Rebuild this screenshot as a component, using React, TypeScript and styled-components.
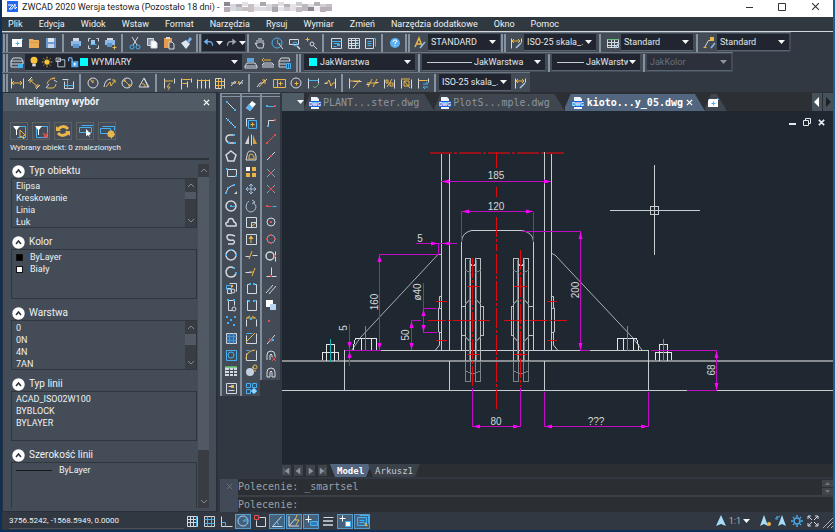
import React from "react";
import styled, { createGlobalStyle, css } from "styled-components";

const Global = createGlobalStyle`
  * { box-sizing: border-box; }
  html, body { margin: 0; padding: 0; }
  body { background: #323842; overflow: hidden; }
  button, select, input { font: inherit; color: inherit; margin: 0; padding: 0; border: 0; background: none; }
  ul { margin: 0; padding: 0; list-style: none; }
  svg { display: block; flex: none; }
`;

const ui = `Roboto, "Noto Sans", sans-serif`;
const mono = `"DejaVu Sans Mono", "Liberation Mono", monospace`;

/* ---------- icons ---------- */

type Part = [d: string, stroke: string, fill?: string, width?: number];
const W = "#d3d9e0";
const B = "#45b0f2";
const Y = "#eab648";
const R = "#e05050";
const G = "#8fa3b8";
const N = "none";

const ci = (x: number, y: number, r: number) =>
  `M${x - r} ${y}a${r} ${r} 0 1 0 ${2 * r} 0a${r} ${r} 0 1 0 ${-2 * r} 0z`;
const re = (x: number, y: number, w: number, h: number) => `M${x} ${y}h${w}v${h}h${-w}z`;
const dots = (...p: number[]) => {
  let s = "";
  for (let i = 0; i < p.length; i += 2) s += re(p[i] - 1, p[i + 1] - 1, 2, 2);
  return s;
};

const icons: Record<string, Part[]> = {
  fresh: [[re(3, 4, 10, 8), N, "#fff"], ["M8 6v4M6 8h4", B], ["M12 3l2 2", B]],
  open: [["M3 4h4l1 1h5v8H3z", N, "#e9ad5c"], ["M3 7h10", "#d89a45"]],
  save: [["M3 3h10v10H3z", N, "#6b9bd0"], [re(5, 3, 6, 4), N, "#dce6f0"], [re(5, 9, 6, 4), N, "#c5d5e8"]],
  print: [[re(3, 6, 10, 5), N, "#8db8e8"], [re(5, 3, 6, 3), N, W], [re(5, 9, 6, 4), N, "#5f93cc"]],
  preview: [["M3 6V3h2M11 3h2v3M3 10v3h2M11 13h2v-3", W], [re(6, 5, 4, 4), N, "#9fc4ee"], ["M5 9h6", B]],
  printPlus: [[re(3, 5, 10, 5), N, "#8db8e8"], [re(5, 3, 6, 2), N, W], [re(5, 8, 5, 4), N, "#5f93cc"], ["M12 10v4M10 12h4", Y]],
  cut: [["M5 2l5 8M11 2L6 10", W], [ci(5, 12, 2), B], [ci(11, 12, 2), B]],
  copy: [["M3 3h6v7H3z", W, "#8b97a5"], ["M7 6h4l2 2v5H7z", W, "#fff"]],
  paste: [["M3 3h8v10H3z", N, "#e79b4f"], [re(5, 2, 4, 2), N, W], ["M8 7h3l2 2v5H8z", W, "#434b57"]],
  brush: [["M3 8l5-3 4 4-4 5z", N, "#dbe7f3"], ["M9 6l3-4 2 2-3 4z", N, "#7db1e6"]],
  undo: [["M4 7h5q4 0 4 5", "#6fb1f0", N, 2], ["M7 3L2 7l5 4z", N, "#6fb1f0"]],
  redo: [["M12 7H7q-4 0-4 5", "#a3a9b0", N, 2], ["M9 3l5 4-5 4z", N, "#a3a9b0"]],
  hand: [["M5 9V5M7 8V3M9 8V3M11 9V5M5 9L3 8l3 5h5l1-5", W]],
  zoomRt: [[ci(8, 8, 5), B], ["M8 4v4h3", B], ["M10 9l4 5", W]],
  zoomWin: [["M3 4h9v5H3z", W], [ci(9, 9, 2), B], ["M11 11l3 3", W, N, 2]],
  zoomPrev: [["M2 4h4M4 2v4", Y], [ci(9, 9, 2), W], ["M11 11l3 3", W]],
  props: [[re(3, 3, 10, 10), W], ["M3 6h10M5 8h6M5 11h3", B], [re(9, 9, 3, 2), N, B]],
  table1: [[re(3, 3, 11, 10), W], ["M6 3v10M10 3v10M3 5h10M3 8h10M3 10h10", W], ["M11 7h2M11 10h2", B]],
  table2: [["M3 3h8v10H3z", W], ["M5 6h4M5 8h4M5 10h4", B], ["M11 3h2v8", B]],
  help: [[ci(8, 8, 5), N, "#58b0f5"], ["M6 7q0-2 2-2t2 1q0 1-2 2v1M8 10v1", "#fff"]],
  textStyle: [["M3 12L7 3l3 8M5 9h4", Y, N, 2], ["M8 13l5-6", "#8dbbe6", N, 2]],
  dimStyle: [["M3 3v10M13 3v4", W], ["M4 6h8M6 4L4 6l2 2M10 4l2 2-2 2", Y], ["M8 13l5-5", "#a9c9ea", N, 2]],
  tableStyle: [[re(2, 4, 11, 8), W], ["M2 7h11M2 10h11M6 4v8M9 4v8", W], ["M2 4h11", "#6cc277"], ["M10 13l4-5", "#a9c9ea", N, 2]],
  leader: [["M3 12L7 5h3", W], [re(9, 2, 4, 4), N, Y], ["M2 12h3", Y], ["M10 13l4-5", "#8dbbe6", N, 2]],
  layers: [["M4 3h8l2 3H2zM2 6v3h12V6M2 9v3h7", W], [re(9, 9, 5, 4), N, B]],
  bulb: [[ci(8, 6, 4), N, "#f7c33c"], [re(6, 10, 4, 3), N, "#d9dde2"]],
  sun: [[ci(8, 8, 3), N, "#f7c33c"], ["M8 2v2M8 12v2M2 8h2M12 8h2M4 4l1 1M11 11l1 1M12 4l-1 1M5 11l-1 1", "#f7c33c"]],
  vp: [["M5 5h8v8H5zM3 3h5v4H3z", W]],
  lock: [["M3 7V5q0-2 2-2t2 2v3", "#79b8ee", N, 2], [re(6, 7, 8, 7), N, "#4aa6ee"], [re(9, 9, 2, 3), N, "#fff"]],
  layerA: [["M4 8h8l2 3H2zM2 11v2h12v-2", W], [re(4, 3, 7, 4), N, "#5fa2dc"]],
  layerB: [["M4 8h8l2 2H2zM2 12h12", W], ["M4 5h7M4 3l-2 2 2 2", Y]],
  layerC: [["M4 3h8l1 3H2zM2 6v6h7M2 9h7", W], [re(9, 8, 5, 5), N, "#434b57"], ["M9 8h4v5H9zM11 8v5", B]],
  dLin: [["M2 3v10M14 3v10", W], ["M3 8h10M5 6L3 8l2 2M11 6l2 2-2 2", Y]],
  dAli: [["M2 6l4-4M10 14l4-4", W], ["M4 5l8 7M4 8V5h3M12 9v3H9", Y]],
  dArc: [["M3 13l3-4M11 5l3 2", W], ["M4 9q2-6 8-6M12 3l-3 1M4 13h6q3-1 3-4", Y]],
  dOrd: [["M2 4h6M4 6v7h9V6", W], ["M7 4v9M4 10h9", B]],
  dRad: [[ci(8, 8, 5), W], ["M8 8l-3-4M8 8V5", Y]],
  dJog: [["M2 12q1-8 7-8", W], ["M4 12l4-5 1 4 4-6M10 5h3v3", Y]],
  dDia: [[ci(8, 8, 5), W], ["M5 5l6 6M5 7V5h2M11 9v2H9", Y]],
  dAng: [["M8 3L3 12h10zM8 3l4 9", W], ["M6 9q3-1 3 3", Y]],
  dQui: [["M3 3v10M13 3v5", W], ["M3 6h9M9 8l-3 4h3l-2 3", Y]],
  dBas: [["M3 3v11M9 6v6M13 3v4", W], ["M4 4h8M4 8h5", Y]],
  dCon: [["M2 4v9M6 4v9M10 4v9M14 4v9", W], ["M2 5h12", Y]],
  dSpa: [["M3 3h6M3 13h6M3 3v10M12 3v10", W], ["M3 6h9M3 10h9M6 3v10M9 3v10", Y]],
  dBrk: [["M2 8h4M10 8h4M2 11l4-5M10 10l4-5", W], ["M6 9l1-3M9 9l1-3", Y]],
  dLea: [["M3 12l3-4h3M9 8l4-4", W], ["M5 12l6-7M11 9V5H8", Y]],
  dTol: [[re(2, 4, 12, 8), Y], ["M6 4v8M9 6v4M7 8h4", Y]],
  dCen: [[ci(8, 8, 5), W], ["M8 6v4M6 8h4", Y]],
  dIns: [["M3 3v10M13 3v5", W], ["M3 5h10", B], ["M8 11l2 2 4-4", "#58b070"]],
  dJg2: [["M13 3v10M2 8h3", W], ["M3 8h2l2-3 2 6 2-3h2", Y]],
  dEd1: [["M2 3v10M6 6h8", W], ["M2 6h10M6 13l7-8", Y]],
  dEd2: [["M2 9h3M11 7h3", W], ["M4 12l4-8M9 12l4-8M3 8h10", Y]],
  dEd3: [["M3 4v9M13 4v9", W], ["M6 12l5-8M5 5h2v3H5zM9 8h3v3H9z", Y]],
  dEd4: [["M3 4v9M13 4v9", W], ["M3 4h9M6 6h5v5H6zM6 6l6 7", Y]],
  dUpd: [["M3 3v10M13 3v4", W], ["M3 5h9", Y], ["M8 9h5l-2-2M13 12H8l2 2", B]],
  line: [["M4 4l8 8", W], [dots(4, 4, 12, 12), N, B]],
  xline: [["M3 3l10 10", W], [dots(5, 5, 8, 8, 12, 12), N, B]],
  pline: [["M11 4H7q-4 0-4 4 0 3 4 4h5", W, N, 2], [dots(11, 4, 12, 12, 6, 12), N, B]],
  poly: [["M8 3l5 4-2 6H5L3 7z", W, N, 2]],
  rect: [[re(4, 5, 9, 7), W], [dots(4, 5, 13, 12), N, B]],
  arc: [["M3 13q1-8 9-9", W], [dots(3, 12, 5, 7, 11, 4), N, B], ["M11 13l3-3v3z", N, W]],
  circ: [[ci(8, 8, 5), W, N, 2], [dots(8, 8), N, B], ["M8 8h4", B]],
  cloud: [["M4 12h9q1-3-2-4-1-5-5-3-1 1-1 3-4 1-1 4z", W, N, 2]],
  spl: [["M12 5Q4 2 4 6t6 3q3 2 0 4H5", W, N, 2]],
  elli: [[ci(8, 8, 5), W, N, 2], [dots(8, 3, 3, 8, 13, 8), N, B]],
  earc: [["M11 4Q5 1 3 7q0 6 5 6 4 0 5-4", W, N, 2], [dots(11, 4, 13, 9), N, B]],
  ins: [["M6 3h7v8M4 8h4v5H4z", W], ["M3 5h5v4H3z", B], [ci(10, 11, 2), W], [dots(9, 6), N, Y]],
  blk: [["M5 3h6v5M5 3v10h4", W], [ci(11, 12, 2), W], [dots(5, 3, 11, 3), N, B]],
  pts: [[dots(4, 4, 12, 4, 8, 7, 5, 10, 11, 12), N, B]],
  hat: [[re(3, 3, 10, 10), W, "#2d6ea8"], ["M3 6h10M3 10h10M6 3v10M10 3v10", "#5a90c0"]],
  reg: [[re(3, 3, 10, 10), B], [ci(8, 8, 3), B]],
  tab: [[re(2, 4, 12, 9), N, W], ["M2 7h12M2 10h12M6 5v8M10 5v8", "#434b57"], ["M2 4h12", "#5fc070", N, 2]],
  mtx: [[re(3, 3, 10, 10), W], ["M5 6h3M5 10h6", W], [re(8, 5, 3, 3), N, Y]],
  ers: [["M3 10l6-7 4 3-6 7z", N, "#fff"], ["M3 10l3-4 4 4-3 3z", N, "#5db4f3"]],
  cpy: [["M3 3h8M3 3v8", W], [re(5, 5, 8, 8), B], ["M9 7v4M7 9h4", Y]],
  mir: [["M6 4v9H2z", N, "#ccd2da"], ["M10 4v9h4z", N, "#d9a23f"], ["M8 3v11", W]],
  off: [["M3 12h10V8q-1-5-5-5T4 8z", W], ["M6 11h5V9q-1-3-3-3T6 9z", Y]],
  arr: [[re(3, 3, 4, 4), N, "#fff"], [re(9, 3, 4, 4) + re(3, 9, 4, 4) + re(9, 9, 4, 4), N, Y]],
  mov: [["M8 3v10M3 8h10M6 5l2-2 2 2M6 11l2 2 2-2M5 6L3 8l2 2M11 6l2 2-2 2", "#9dbcdc"]],
  rot: [["M6 3Q3 5 3 9q1 5 5 5 5-1 5-6l-3-4", "#a8bdd4"], ["M9 2l3 2-3 2", "#a8bdd4"]],
  scl: [[re(3, 3, 10, 10), W], ["M8 13V8h5", W], ["M9 12l4-3", Y]],
  str: [[re(3, 3, 10, 10), W], ["M8 12V6M6 8l2-3 2 3", Y, Y]],
  trm: [["M2 9h4M9 8h5", W], ["M6 12l3-8", Y]],
  ext: [["M2 8h6", W], ["M9 12l3-8M6 8h4", Y]],
  bk1: [["M6 4H4v9h9V4h-2", W], [dots(7, 4, 11, 4), N, B]],
  bk2: [["M5 3H4v10h9V3h-1", W], [dots(6, 4, 11, 4), N, B]],
  joi: [["M3 13V6M13 13V6", W], ["M4 5l3-2M12 5L9 3M3 5h10", Y], [dots(8, 6), N, B]],
  cha: [["M3 5v8h10V3", W], ["M3 12l9-9", Y], ["M3 3h6", B]],
  fil: [["M3 6v7h10V3", W], ["M3 12q0-8 9-9", Y], ["M3 3h3", B]],
  exp: [[ci(7, 9, 4), N, "#c3d0e2"], [ci(12, 4, 2), Y], ["M9 4l2 1M12 7v2", Y]],
  bed: [[re(3, 3, 4, 4) + re(9, 3, 4, 4) + re(3, 9, 4, 4), B], ["M11 8l3 3-3 3-3-3z", B, "#9bd3ff"]],
  sA: [["M4 8h8", B], [dots(4, 8), N, B], [dots(12, 8), N, R]],
  sB: [["M5 11V5h7", W], [dots(5, 11), N, B], [dots(12, 5), N, R]],
  sC: [["M4 12l8-8", R], [dots(4, 12, 12, 4), N, R]],
  sD: [["M4 12l8-8", W], [dots(8, 8), N, R]],
  sE: [["M4 4l8 8M12 4l-8 8", G], [dots(8, 8), N, R]],
  sF: [["M4 4l8 8M12 4l-8 8", G], ["M6 6l4 4M10 6l-4 4", R]],
  sG: [["M4 8h4", R], [dots(4, 8), N, R], ["M9 8h4", B]],
  sH: [[ci(8, 8, 4), W], [dots(8, 8), N, R]],
  sI: [[ci(8, 8, 4), G], [dots(8, 4, 8, 12, 4, 8, 12, 8), N, R]],
  sJ: [[ci(7, 8, 4), W, N, 2], ["M12 3v10", W], [dots(12, 8), N, R]],
  sK: [["M8 3v9M3 12h10", W], [dots(8, 12), N, R]],
  sL: [["M3 12l7-8M6 13l7-8", W]],
  sM: [[re(3, 3, 7, 7), N, "#fff"], [re(7, 7, 6, 6), N, "#b9d6f2"]],
  sN: [[dots(6, 7), N, R]],
  sO: [["M4 13l8-9", W], ["M6 7l3 4M9 7l-3 3", R], [dots(10, 9), N, B]],
  magX: [["M4 13V8q0-4 4-4t4 4v2M7 13V8q1-2 2 0v2", W], ["M9 10l4 4M13 10l-4 4", R]],
  mag: [["M4 13V8q0-4 4-4t4 4v5H9V8q-1-2-2 0v5z", W]],
  selF: [["M3 3h11v11H6", B], ["M2 3h7L6 7v5H5V7z", N, "#fff"], ["M9 7l5 5-2 1 1 3-3-3-1 1z", Y, "#434b57"]],
  selX: [["M3 3h11v11H3z", B], ["M2 3h7L6 7v5H5V7z", N, "#fff"], ["M10 10l5 5M15 10l-5 5", R, N, 2]],
  sync: [["M13 6Q9 1 3 6M3 10q4 5 10 0", Y, N, 3], ["M1 3v5h5zM15 13V8h-5z", N, Y]],
  selW: [["M2 4h12v5H2zM4 2h12v4", B], ["M9 6l5 5-2 1 1 3-2-3-2 1z", N, "#fff"]],
  selG: [["M1 5h10v5H1zM3 3h12v4", B], [ci(12, 11, 2), Y, N, 3], ["M12 7v8M8 11h8", Y]],
  grid: [[re(3, 3, 10, 10), W], ["M6 3v10M9 3v10M3 6h10M3 9h10", W], ["M12 3v10", B]],
  snap: [[re(3, 3, 10, 10), W], ["M6 3v10M10 3v10M3 6h10M3 10h10", B]],
  ortho: [["M3 3v10h11", W], ["M3 9h4v4", B]],
  polar: [[ci(8, 8, 5), "#9fcdf5"], ["M8 8l5-3M8 8h5", B]],
  osnap: [["M7 4h6v9H4V7", W], [re(2, 2, 4, 4), R]],
  otrack: [["M12 3L3 13h10", "#b8dcf8"], ["M8 9q2 1 1 3", B]],
  ducs: [["M3 3v10h10M3 13l7-8", W], ["M11 2l-2 5h4l-3 5", Y]],
  dyn: [["M5 2v7M2 6h6", "#fff"], [re(7, 8, 7, 4), B, "#2f7db5"]],
  lwt: [["M3 4h10", W], ["M3 8h10M3 12h10", W, N, 2]],
  cyc: [["M5 2v6M2 5h6", "#fff"], [re(8, 8, 5, 5), B, "#fff"]],
  qp: [[re(3, 4, 9, 8), B, "#3b6c94"], ["M5 2h9v8M5 7h5M5 9h5", B], ["M11 10l2 3", Y, N, 2]],
  anno: [["M8 2l5 11-5-2-5 2z", N, "#a7dcf7"]],
  annoB: [["M7 2l4 11-4-2-4 2z", N, "#a7dcf7"], [ci(12, 11, 2), N, Y]],
  annoC: [["M9 2l4 11-4-2-4 2z", N, "#a7dcf7"], ["M2 6l5-3M4 3v4", B]],
  gear: [[ci(8, 8, 3), "#4aa9ea", N, 2], ["M8 2v2M8 12v2M2 8h2M12 8h2M4 4l1 1M11 11l1 1M12 4l-1 1M5 11l-1 1", "#4aa9ea", N, 2]],
  full: [["M3 6V3h3M10 3h3v3M3 10v3h3M13 10v3h-3M3 3l4 4M13 3L9 7M3 13l4-4M13 13L9 9", W]],
};

const isStraight = (d: string) => !/[aqQtTl]/.test(d);

const Icon = ({ name, size = 16 }: { name: string; size?: number }) => (
  <svg width={size} height={size} viewBox="0 0 16 16" aria-hidden="true">
    {icons[name].map(([d, stroke, fill, width], i) => (
      <path
        key={i}
        d={d}
        stroke={stroke}
        fill={fill ?? "none"}
        strokeWidth={width === 2 ? 1.5 : width ?? 1}
        transform={stroke !== N && !width && isStraight(d) ? "translate(.5 .5)" : undefined}
      />
    ))}
  </svg>
);

const Caret = ({ color = "#f4f6f8" }: { color?: string }) => (
  <svg width="7" height="4" viewBox="0 0 7 4" aria-hidden="true">
    <path d="M0 0h7L3.500 4z" fill={color} />
  </svg>
);

/* ---------- frame, title and menu ---------- */

const Frame = styled.div`
  display: flex;
  flex-direction: column;
  height: 100vh;
  border: solid #0d3156;
  border-width: 0 2px 2px 2px;
  border-right-color: #17618f;
  background: #323842;
  color: #eef1f4;
  font: 9px/12px ${ui};
`;

const TitleBar = styled.header`
  display: flex;
  align-items: center;
  height: 17px;
  padding: 0 12px 4px 5px;
  background: #fff;
  color: #1c1c1c;
  font-size: 9px;
`;
const TitleText = styled.span`
  margin: 0 4px;
  white-space: nowrap;
`;
const WindowButtons = styled.div`
  display: flex;
  gap: 21px;
  margin-left: auto;
`;
const PlainButton = styled.button`
  display: flex;
  align-items: center;
  justify-content: center;
  min-width: 12px;
  min-height: 12px;
`;

const Menu = styled.nav`
  display: flex;
  gap: 16px;
  height: 15px;
  padding: 0 6px;
  align-items: center;
  background: #30393f;
  border-bottom: 1px solid #d5d8da;
`;
const MenuItem = styled.button`
  white-space: nowrap;
  line-height: 12px;
`;

/* ---------- toolbars ---------- */

const Toolbars = styled.div`
  display: flex;
  flex-direction: column;
  align-items: flex-start;
`;
const Bar = styled.div`
  display: flex;
  align-items: center;
  height: 20px;
  padding-right: 2px;
  background: #434b57;
  border-top: 1px solid #6b7682;
`;
const Grip = styled.span<{ $w?: number; $double?: boolean }>`
  flex: none;
  width: ${(p) => p.$w ?? 8}px;
  height: 18px;
  display: flex;
  gap: 1px;
  justify-content: center;
  &::before { content: ""; width: 2px; background: #8492a1; }
  ${(p) => p.$double && css`&::after { content: ""; width: 2px; background: #8492a1; }`}
`;
const Tool = styled.button`
  display: flex;
  align-items: center;
  justify-content: center;
  width: 17px;
  height: 18px;
  flex: none;
`;
const History = styled.div`
  display: flex;
  align-items: center;
  gap: 2px;
  width: 43px;
  height: 17px;
  background: #20252f;
`;
const Combo = styled.label<{ $w: number; $dim?: boolean }>`
  display: flex;
  align-items: center;
  gap: 1px;
  width: ${(p) => p.$w}px;
  height: 17px;
  padding: 0 4px 0 3px;
  background: ${(p) => (p.$dim ? "#2b303b" : "#20252f")};
  border-bottom: 1px solid #5a6572;
  color: ${(p) => (p.$dim ? "#858c96" : "#e3e7eb")};
  select {
    flex: 1;
    min-width: 0;
    appearance: none;
    outline: 0;
    text-overflow: clip;
  }
`;
const StateTool = styled.button`
  display: flex;
  justify-content: center;
  width: 12px;
  flex: none;
`;
const Swatch = styled.span<{ $color: string; $lead?: boolean }>`
  flex: none;
  width: 8px;
  height: 8px;
  margin: 0 2px 0 ${(p) => (p.$lead ? 2 : 0)}px;
  background: ${(p) => p.$color};
`;
const Sample = styled.span<{ $w: number }>`
  flex: none;
  width: ${(p) => p.$w}px;
  height: 1px;
  margin: 0 1px 0 2px;
  background: #c5cbd1;
`;

const Tools = ({ names }: { names: string }) => (
  <>
    {names.split(" ").map((n, i) => (
      <Tool key={i} type="button" aria-label={n}>
        <Icon name={n} />
      </Tool>
    ))}
  </>
);

const Dropdown = ({ label, value, w, dim, children }: {
  label: string; value: string; w: number; dim?: boolean; children?: React.ReactNode;
}) => (
  <Combo $w={w} $dim={dim}>
    {children}
    <select aria-label={label} defaultValue={value} disabled={dim}>
      <option>{value}</option>
    </select>
    <Caret color={dim ? "#8d949d" : undefined} />
  </Combo>
);

/* ---------- smart selection panel ---------- */

const Workspace = styled.div`
  display: flex;
  flex: 1;
  min-height: 0;
`;
const Panel = styled.aside`
  display: flex;
  flex-direction: column;
  flex: none;
  width: 216px;
  border: solid #2b3038;
  border-width: 1px 2px 1px 1px;
  background: #434c57;
`;
const PanelHead = styled.div`
  display: flex;
  align-items: center;
  justify-content: space-between;
  height: 18px;
  padding: 0 4px 0 13px;
  background: #505b65;
  font: bold 10px/14px ${ui};
`;
const PanelTools = styled.div`
  display: flex;
  gap: 4px;
  padding: 11px 7px 0;
`;
const PanelTool = styled.button`
  display: flex;
  align-items: center;
  justify-content: center;
  width: 18px;
  height: 18px;
  border: 1px solid #5d615f;
`;
const Found = styled.p`
  margin: 0 7px;
  padding: 2px 0 4px;
  border-bottom: 2px solid #2d333b;
  font-size: 8px;
`;
const PanelBody = styled.div`
  display: flex;
  flex: 1;
  min-height: 0;
  margin: 4px 7px 3px;
`;
const Sections = styled.div`
  flex: 1;
  overflow: hidden;
`;
const Section = styled.section`
  margin-bottom: 7px;
`;
const SectionHead = styled.button`
  display: flex;
  align-items: center;
  gap: 4px;
  height: 14px;
  padding-left: 2px;
  font-size: 10px;
  line-height: 14px;
`;
const ListFrame = styled.div`
  display: flex;
  height: 50px;
  margin: 0 1px;
  border: 1px solid #30363e;
`;
const List = styled.ul`
  flex: 1;
  padding: 1px 4px;
`;
const Row = styled.li`
  display: flex;
  align-items: center;
  height: 12px;
`;
const Chip = styled.span<{ $color: string }>`
  width: 7px;
  height: 7px;
  margin-right: 7px;
  border: 1px solid #111;
  background: ${(p) => p.$color};
`;
const Weight = styled.span`
  width: 36px;
  height: 1px;
  margin-right: 7px;
  background: #15181c;
`;
const Track = styled.div`
  display: flex;
  flex-direction: column;
  width: 11px;
  flex: none;
  background: #393d43;
`;
const ScrollButton = styled.button`
  display: flex;
  align-items: center;
  justify-content: center;
  height: 13px;
  flex: none;
`;
const Thumb = styled.div<{ $h: number }>`
  height: ${(p) => p.$h}px;
  margin-bottom: auto;
  background: #515a64;
`;

const Chevron = ({ down }: { down?: boolean }) => (
  <svg width="8" height="5" viewBox="0 0 8 5" fill="none" stroke="#858b92">
    <path d={down ? "M1 1l3 3 3-3" : "M1 4l3-3 3 3"} />
  </svg>
);
const Scroll = ({ h }: { h: number }) => (
  <Track>
    <ScrollButton type="button" aria-label="W górę"><Chevron /></ScrollButton>
    <Thumb $h={h} />
    <ScrollButton type="button" aria-label="W dół"><Chevron down /></ScrollButton>
  </Track>
);
const Group = ({ title, scroll, children }: { title: string; scroll?: number; children: React.ReactNode }) => (
  <Section>
    <SectionHead type="button">
      <svg width="13" height="13" viewBox="0 0 13 13">
        <circle cx="6.500" cy="6.500" r="6.200" fill="#fff" />
        <path d="M4 8l2.500-3L9 8" fill="none" stroke="#2b3138" strokeWidth="1.500" />
      </svg>
      {title}
    </SectionHead>
    <ListFrame>
      <List aria-label={title}>{children}</List>
      {scroll ? <Scroll h={scroll} /> : null}
    </ListFrame>
  </Section>
);

/* ---------- palettes, canvas ---------- */

const Palettes = styled.div`
  display: flex;
  flex: none;
  align-items: flex-start;
  margin-left: 2px;
`;
const Palette = styled.div<{ $rows: number; $h: number }>`
  display: grid;
  grid-template-rows: repeat(${(p) => p.$rows}, 1fr);
  justify-items: center;
  width: 20px;
  height: ${(p) => p.$h}px;
  margin-top: 1px;
  padding-top: 5px;
  border-left: 2px solid #7f8e9e;
  background:
    linear-gradient(#8492a1 0 1px, #434b57 1px 3px, #8492a1 3px 4px, #434b57 4px);
`;
const PaletteTool = styled.button`
  display: flex;
  align-items: center;
  min-height: 0;
  overflow: visible;
`;

const Right = styled.div`
  display: flex;
  flex: 1;
  flex-direction: column;
  min-width: 0;
`;
const Editor = styled.main`
  display: flex;
  flex: 1;
  min-height: 0;
`;
const Document = styled.div`
  display: flex;
  flex: 1;
  flex-direction: column;
  min-width: 0;
  margin-left: 2px;
`;
const Tabs = styled.div`
  display: flex;
  align-items: flex-end;
  height: 19px;
  background: #2c2f33;
  font: 10px/14px ${mono};
`;
const TabList = styled.button`
  display: flex;
  align-items: center;
  justify-content: flex-end;
  width: 22px;
  height: 18px;
  background: #505c65;
`;
const Tab = styled.button<{ $active?: boolean }>`
  display: flex;
  align-items: center;
  gap: 2px;
  height: 17px;
  padding: 0 15px 0 5px;
  background: ${(p) => (p.$active ? "#52667f" : "#3f4650")};
  color: ${(p) => (p.$active ? "#fff" : "#8d959e")};
  font-weight: ${(p) => (p.$active ? "bold" : "normal")};
  clip-path: polygon(6px 0, calc(100% - 10px) 0, 100% 100%, 0 100%, 0 14px);
  ${(p) => p.$active && css`padding: 0 12px 0 7px; gap: 3px;`}
`;
const NewTab = styled(Tab)`
  padding: 0 6px 0 0;
`;
const TabArrows = styled.div`
  display: flex;
  gap: 1px;
  margin-left: auto;
  button { width: 10px; height: 18px; background: #46515a; }
`;
const Canvas = styled.div`
  position: relative;
  flex: 1;
  min-height: 0;
  background: #1f2830;
  overflow: hidden;
`;
const CanvasButtons = styled.div`
  position: absolute;
  top: 5px;
  right: 6px;
  display: flex;
  gap: 2px;
`;
const Sheets = styled.div`
  display: flex;
  align-items: center;
  gap: 3px;
  height: 13px;
  background: #2b2e33;
  font: 9px/12px ${mono};
`;
const SheetNav = styled.button`
  display: flex;
  align-items: center;
  justify-content: center;
  width: 9px;
  height: 11px;
  background: #3d444c;
`;
const Sheet = styled.button<{ $active?: boolean }>`
  height: 13px;
  padding: 0 7px;
  margin-right: -6px;
  background: ${(p) => (p.$active ? "#52667f" : "#3a4149")};
  color: ${(p) => (p.$active ? "#fff" : "#c3c9cf")};
  font-weight: ${(p) => (p.$active ? "bold" : "normal")};
  clip-path: polygon(0 0, 100% 0, calc(100% - 5px) 100%, 5px 100%);
`;
const Command = styled.div`
  display: flex;
  height: 33px;
  margin: 2px 0 0 2px;
  background: #2b2e33;
  color: #9aa1a9;
  font: 10px/14px ${mono};
`;
const CommandClose = styled.button`
  display: flex;
  justify-content: center;
  align-items: flex-start;
  width: 18px;
  padding-top: 4px;
  background: #424a57;
`;
const CommandText = styled.div`
  display: flex;
  flex: 1;
  flex-direction: column;
`;
const Log = styled.div`
  display: flex;
  align-items: center;
  justify-content: space-between;
  height: 18px;
  border-bottom: 2px solid #3c4046;
`;
const Prompt = styled.label`
  display: flex;
  align-items: center;
  height: 15px;
  input { flex: 1; outline: 0; }
`;
const LogScroll = styled.div`
  display: grid;
  gap: 1px;
  width: 11px;
  button { display: flex; align-items: center; justify-content: center; height: 7px; background: #40454c; }
`;

const Status = styled.footer`
  display: flex;
  align-items: center;
  height: 18px;
  padding-left: 7px;
  background: #313842;
`;
const Coords = styled.output`
  width: 175px;
  height: 16px;
  border-bottom: 1px solid #4a525c;
  font-size: 8px;
  line-height: 16px;
`;
const Toggles = styled.div`
  display: flex;
  gap: 1px;
`;
const Toggle = styled.button<{ $on?: boolean }>`
  display: flex;
  align-items: center;
  justify-content: center;
  width: 16px;
  height: 15px;
  border: 1px solid ${(p) => (p.$on ? "#5b9bc9" : "transparent")};
  background: ${(p) => (p.$on ? "#43617b" : "transparent")};
`;
const StatusRight = styled.div`
  display: flex;
  align-items: center;
  margin-left: auto;
  color: #a9afb6;
`;
const ScaleButton = styled.button`
  display: flex;
  align-items: center;
  gap: 2px;
  margin-right: 7px;
`;

const toggles: [string, boolean][] = [
  ["grid", false], ["snap", false], ["ortho", false], ["polar", true], ["osnap", false], ["otrack", true],
  ["ducs", true], ["dyn", true], ["lwt", false], ["cyc", true], ["qp", true],
];

const FileIcon = () => (
  <svg width="12" height="12" viewBox="0 0 12 12" aria-hidden="true">
    <path d="M2 0h6l2 2v10H2z" fill="#f2f5f8" />
    <path d="M0 4h12v6H0z" fill="#1765d8" />
    <text x="6" y="9" fontSize="5" fontWeight="bold" fontFamily="Liberation Sans" textAnchor="middle" fill="#fff">DWG</text>
  </svg>
);

const Cross = ({ size = 7, color = "#fff", width = 1.500 }: { size?: number; color?: string; width?: number }) => (
  <svg width={size} height={size} viewBox="0 0 8 8" aria-hidden="true">
    <path d="M1 1l6 6M7 1L1 7" stroke={color} strokeWidth={width} />
  </svg>
);

/* ---------- technical drawing ---------- */

const Drawing = styled.svg`
  width: 100%;
  height: 100%;
  text {
    font: 10px "Liberation Sans", sans-serif;
    fill: #d5d8da;
    text-anchor: middle;
  }
`;

const tip = (x: number, y: number, dir: "l" | "r" | "u" | "d") =>
  ({
    l: `M${x} ${y}l7-2v4z`,
    r: `M${x} ${y}l-7-2v4z`,
    u: `M${x} ${y}l-2 7h4z`,
    d: `M${x} ${y}l-2-7h4z`,
  })[dir];

const Wheel = ({ x, left, right }: { x: number; left: string; right: string }) => (
  <g>
    <path d={`M${x - 7} 361V258.500h5v5l1 2h3l1-2v-5h5V361M${x - 2} 265v96M${x + 3} 265v96`} stroke="#b9bdc0" />
    <path d={`M${x - 3} 260v101M${x + 4} 260v101`} stroke="#70777d" />
    <path d={`M${x - 7} 361v20h5v-8h5v8h5v-20M${x - 7} 371l5 2M${x + 8} 371l-5 2M${x - 2} 361v12M${x + 3} 361v12M${x - 7} 270l5 3M${x + 8} 270l-5 3M${x - 7} 304l5-5M${x + 8} 304l-5-5M${x - 7} 337l5 5M${x + 8} 337l-5 5`} stroke="#7d8387" />
    <path d={left + right} stroke="#b9bdc0" />
  </g>
);

const Bracket = ({ x, s }: { x: number; s: number }) => (
  <path
    d={`M${x} 296.500h${s * 2}v11.500h${s}v24h${-s}v13l${s * 4} 5M${x + s * 2} 308.500h${-s * 2}M${x + s * 2} 332.500h${-s * 2}`}
    stroke="#c3c7ca"
  />
);

const Plan = () => (
  <Drawing viewBox="282 111 551 354" preserveAspectRatio="xMinYMin slice" fill="none" role="img" aria-label="kioto">
    <g shapeRendering="crispEdges">
      <path d="M282 361h2000" stroke="#878c90" strokeWidth="2" />
      <path
        d="M282 390.500h2000M344.500 390V350.500h304V390M441.500 152v198M449.500 152v198M449.500 361v29M544.500 152v198M544.500 361v29M551.500 152v198M461.500 241v109M533.500 241v109M471 230.500h51"
        stroke="#c9ccce"
      />
    </g>
    <path d="M461.500 242q0-9 10-11.500M533.500 242q0-9-11-11.500" stroke="#b9bdc0" />
    <path d="M441 254.500h-3L360 338l-8 12M552 253.500l3 1.500 78 83 9 12" stroke="#a9aeb1" />
    <Bracket x={441.500} s={-1} />
    <Bracket x={551.500} s={1} />
    <g shapeRendering="crispEdges">
      <Wheel x={472.500} left="M461.500 306.500h4M461.500 335.500h4" right="M480.500 306.500h3v29h-3" />
      <Wheel x={520.500} left="M513.500 306.500h-2v29h2" right="M528.500 306.500h5M528.500 335.500h5" />
      <path
        d="M326.500 352v-7.500h8v7.500M322.500 360v-7.500h16v7.500M326.500 352v9M334.500 352v9M659.500 352v-7.500h8v7.500M655.500 360v-7.500h16v7.500M659.500 352v9M667.500 352v9"
        stroke="#e2e4e5"
      />
      <path
        d="M353.500 350v-4l2-7.500h21v11.500M361.500 339v11M371.500 339v11M617.500 350v-11.500h19l2 7.500v4M623.500 339v11M633.500 339v11"
        stroke="#e2e4e5"
      />
      <path d="M330.500 339v23M365.500 326v25M627.500 326v25M663.500 339v23" stroke="#15b4b4" />
      <g stroke="#dc0a10">
        <path d="M430 152.500h134" strokeWidth="2" stroke="#95141b" strokeDasharray="22 2 3 2" />
        <path d="M496.500 152v16M496.500 187v10M496.500 217v34M496.500 254v156" strokeDasharray="20 2 3 2" />
        <path d="M472.500 258v129M520.500 250v137" strokeDasharray="20 2 3 2" />
        <path d="M428 320.500h62M504 320.500h63" strokeDasharray="18 2 3 2" />
        <path d="M436 301.500h11M436 340.500h11M547 301.500h10M547 340.500h10M467 286.500h13M514 286.500h13M467 354.500h13M514 354.500h13" />
      </g>
      <path
        stroke="#c00cc4"
        d="M441 181.500h110M461 211.500h72M461.500 212v30M533.500 212v30M522 231.500h58.500V350M580 350.500h10M416 243.500h41M438.500 243v11M439 254.500h-59.500V350M423.500 283v49M423 308.500h14M423 332.500h14M411.500 350v-29.500h9M349.500 324v42M345 350.500h36M472.500 388v38.500h48V388M544.500 392v34.500h104V392M651 350.500h65.500v40H687"
      />
    </g>
    <path
      fill="#ff00ff"
      d={
        tip(442, 181.500, "l") + tip(551, 181.500, "r") + tip(462, 211.500, "l") + tip(533, 211.500, "r") +
        tip(438, 243.500, "r") + tip(443, 243.500, "l") + tip(379.500, 255, "u") + tip(379.500, 350, "d") +
        tip(423.500, 309, "u") + tip(423.500, 332, "d") + tip(411.500, 321, "u") + tip(411.500, 350, "d") +
        tip(349.500, 349, "d") + tip(349.500, 351, "u") + tip(580.500, 232, "u") + tip(580.500, 350, "d") +
        tip(473, 426.500, "l") + tip(520, 426.500, "r") + tip(545, 426.500, "l") + tip(648, 426.500, "r") +
        tip(716.500, 351, "u") + tip(716.500, 390, "d")
      }
    />
    <text x="496" y="179">185</text>
    <text x="496" y="210">120</text>
    <text x="420" y="242">5</text>
    <text x="496" y="425">80</text>
    <text x="596" y="425">???</text>
    <text transform="translate(378 302) rotate(-90)">160</text>
    <text transform="translate(421 292) rotate(-90)">ø40</text>
    <text transform="translate(409 335) rotate(-90)">50</text>
    <text transform="translate(347 328) rotate(-90)">5</text>
    <text transform="translate(579 290) rotate(-90)">200</text>
    <text transform="translate(715 370) rotate(-90)">68</text>
    <path
      d="M654.500 165v90M610 210.500h90M650.500 206.500h8v8h-8z"
      stroke="#c9cdd0"
      shapeRendering="crispEdges"
    />
  </Drawing>
);

const mosaic = [
  "#8f8693", "#d9d4dc", "#b5adb8", "#e4e1e5", "#cbbfc4", "#efedf0", "#a9a7ae", "#d8d9dd", "#c0bcc4", "#dedce0", "#b7b0b8",
  "#e8e3e4", "#c9ccd2", "#bdb7bc", "#dcdde1", "#b3b0b8", "#d2ced2", "#c5bfc3",
];

const menu = ["Plik", "Edycja", "Widok", "Wstaw", "Format", "Narzędzia", "Rysuj", "Wymiar", "Zmień", "Narzędzia dodatkowe", "Okno", "Pomoc"];

const palettes = [
  "line xline pline poly rect arc circ cloud spl elli earc ins blk pts hat reg tab mtx",
  "ers cpy mir off arr mov rot scl str trm ext bk1 bk2 joi cha fil exp bed",
  "sA sB sC sD sE sF sG sH sI sJ sK sL sM sN sO magX mag",
];

export default function App() {
  return (
    <Frame>
      <Global />
      <TitleBar>
        <svg width="11" height="11" viewBox="0 0 11 11">
          <path d="M0 0h11v11H0z" fill="#2468f2" />
          <path d="M1 4h5L2 8h3l3-5v5l2-2" fill="none" stroke="#fff" />
        </svg>
        <TitleText>ZWCAD 2020 Wersja testowa (Pozostało 18 dni) -</TitleText>
        <svg width="108" height="10" viewBox="0 0 108 10">
          {mosaic.map((c, i) => (
            <g key={i} fill={c}>
              <path d={re(i * 6, i % 3 ? 2 : 0, 6, 4)} />
              <path d={re(i * 6, 5, 6, i % 4 ? 4 : 5)} fill={mosaic[(i * 5 + 2) % 18]} />
            </g>
          ))}
        </svg>
        <WindowButtons>
          <PlainButton type="button" aria-label="Minimalizuj">
            <svg width="9" height="8" viewBox="0 0 9 8"><path d="M1 4.500h7" stroke="#333" /></svg>
          </PlainButton>
          <PlainButton type="button" aria-label="Maksymalizuj">
            <svg width="8" height="8" viewBox="0 0 8 8"><path d="M.5.5h7v7h-7z" stroke="#333" fill="none" /></svg>
          </PlainButton>
          <PlainButton type="button" aria-label="Zamknij"><Cross size={9} color="#333" width={1} /></PlainButton>
        </WindowButtons>
      </TitleBar>
      <Menu>{menu.map((m) => <MenuItem key={m} type="button">{m}</MenuItem>)}</Menu>

      <Toolbars>
        <Bar>
          <Grip $double $w={6} />
          <Tools names="fresh open save" /><Grip />
          <Tools names="print preview printPlus" /><Grip />
          <Tools names="cut copy paste brush" /><Grip $double />
          <History>
            <StateTool type="button" aria-label="Cofnij"><Icon name="undo" size={13} /></StateTool><Caret />
            <StateTool type="button" aria-label="Ponów"><Icon name="redo" size={13} /></StateTool><Caret />
          </History>
          <Grip $w={6} />
          <Tools names="hand zoomRt zoomWin zoomPrev" /><Grip />
          <Tools names="props table1 table2" /><Grip />
          <Tools names="help" /><Grip $double />
          <Tools names="textStyle" /><Dropdown label="Styl tekstu" value="STANDARD" w={72} /><Grip $w={7} $double />
          <Tools names="dimStyle" /><Dropdown label="Styl wymiarowania" value="ISO-25 skala_..." w={72} /><Grip />
          <Tools names="tableStyle" /><Dropdown label="Styl tabeli" value="Standard" w={72} /><Grip $w={7} />
          <Tools names="leader" /><Dropdown label="Styl odnośnika" value="Standard" w={72} />
        </Bar>
        <Bar>
          <Grip $double $w={6} />
          <Tools names="layers" />
          <Dropdown label="Warstwa" value="WYMIARY" w={217}>
            {["bulb", "sun", "vp", "lock"].map((n) => (
              <StateTool key={n} type="button" aria-label={n}><Icon name={n} size={14} /></StateTool>
            ))}
            <Swatch $color="#00ffff" />
          </Dropdown>
          <Tools names="layerA layerB layerC" /><Grip $w={11} $double />
          <Dropdown label="Kolor" value="JakWarstwa" w={111}><Swatch $color="#00ffff" $lead /></Dropdown><Grip $w={7} />
          <Dropdown label="Rodzaj linii" value="JakWarstwa" w={123}><Sample $w={45} /></Dropdown><Grip $w={7} />
          <Dropdown label="Szerokość linii" value="JakWarstwa" w={88}><Sample $w={27} /></Dropdown><Grip $w={7} />
          <Dropdown label="Styl wydruku" value="JakKolor" w={84} dim />
        </Bar>
        <Bar>
          <Grip $double $w={6} />
          <Tools names="dLin dAli dArc dOrd" /><Grip />
          <Tools names="dRad dJog dDia dAng" /><Grip />
          <Tools names="dQui dBas dCon dSpa dBrk" /><Grip />
          <Tools names="dLea dTol dCen dIns dJg2" /><Grip />
          <Tools names="dEd1 dEd2 dEd3 dEd4 dUpd" /><Grip />
          <Dropdown label="Styl wymiaru" value="ISO-25 skala_..." w={72} />
          <Tools names="dimStyle" />
        </Bar>
      </Toolbars>

      <Workspace>
        <Panel>
          <PanelHead>
            Inteligentny wybór
            <PlainButton type="button" aria-label="Zamknij panel"><Cross /></PlainButton>
          </PanelHead>
          <PanelTools>
            {["selF", "selX", "sync", "selW", "selG"].map((n) => (
              <PanelTool key={n} type="button" aria-label={n}><Icon name={n} /></PanelTool>
            ))}
          </PanelTools>
          <Found>Wybrany obiekt: 0 znalezionych</Found>
          <PanelBody>
            <Sections>
              <Group title="Typ obiektu" scroll={7}>
                <Row>Elipsa</Row><Row>Kreskowanie</Row><Row>Linia</Row><Row>Łuk</Row>
              </Group>
              <Group title="Kolor">
                <Row><Chip $color="#000" />ByLayer</Row>
                <Row><Chip $color="#fff" />Biały</Row>
              </Group>
              <Group title="Warstwa" scroll={11}>
                <Row>0</Row><Row>0N</Row><Row>4N</Row><Row>7AN</Row>
              </Group>
              <Group title="Typ linii">
                <Row>ACAD_ISO02W100</Row><Row>BYBLOCK</Row><Row>BYLAYER</Row>
              </Group>
              <Group title="Szerokość linii">
                <Row><Weight />ByLayer</Row>
              </Group>
            </Sections>
            <Scroll h={273} />
          </PanelBody>
        </Panel>

        <Right>
          <Editor>
            <Palettes>
              {palettes.map((p, k) => (
                <Palette key={k} $rows={k === 2 ? 17 : 18} $h={k === 2 ? 287 : 303}>
                  {p.split(" ").map((n) => (
                    <PaletteTool key={n} type="button" aria-label={n}><Icon name={n} /></PaletteTool>
                  ))}
                </Palette>
              ))}
            </Palettes>
            <Document>
              <Tabs>
                <TabList type="button" aria-label="Lista dokumentów"><Caret /></TabList>
                <Tab type="button"><FileIcon />PLANT...ster.dwg</Tab>
                <Tab type="button"><FileIcon />PlotS...mple.dwg</Tab>
                <Tab type="button" $active><FileIcon />kioto...y_05.dwg<Cross /></Tab>
                <NewTab type="button" aria-label="Nowy dokument"><Icon name="fresh" /></NewTab>
                <TabArrows>
                  <button type="button" aria-label="Poprzednia karta">
                    <svg width="10" height="10" viewBox="0 0 10 10"><path d="M7 0v10L2 5z" fill="#fff" /></svg>
                  </button>
                  <button type="button" aria-label="Następna karta">
                    <svg width="10" height="10" viewBox="0 0 10 10"><path d="M3 0v10l5-5z" fill="#1b2025" /></svg>
                  </button>
                </TabArrows>
              </Tabs>
              <Canvas>
                <Plan />
                <CanvasButtons>
                  <PlainButton type="button" aria-label="Minimalizuj rysunek">
                    <svg width="8" height="8" viewBox="0 0 8 8"><path d="M0 6h7" stroke="#e5e8ea" strokeWidth="2" /></svg>
                  </PlainButton>
                  <PlainButton type="button" aria-label="Przywróć rysunek">
                    <svg width="8" height="8" viewBox="0 0 8 8">
                      <path d="M2.500 2V.5h5v5H6M.5 2.500h5v5h-5z" stroke="#e5e8ea" fill="none" />
                    </svg>
                  </PlainButton>
                  <PlainButton type="button" aria-label="Zamknij rysunek"><Cross color="#e5e8ea" width={2} /></PlainButton>
                </CanvasButtons>
              </Canvas>
              <Sheets>
                {["M2 1v6M7 1v6L3 4z", "M6 1v6L2 4z", "M3 1v6l4-3z", "M7 1v6M2 1v6l4-3z"].map((d, i) => (
                  <SheetNav key={i} type="button" aria-label={`Arkusz ${i + 1}`}>
                    <svg width="9" height="8" viewBox="0 0 9 8"><path d={d} fill="#8e959c" stroke="#8e959c" strokeWidth=".5" /></svg>
                  </SheetNav>
                ))}
                <Sheet type="button" $active>Model</Sheet>
                <Sheet type="button">Arkusz1</Sheet>
              </Sheets>
            </Document>
          </Editor>
          <Command>
            <CommandClose type="button" aria-label="Zamknij wiersz poleceń"><Cross color="#6d757f" width={1} /></CommandClose>
            <CommandText>
              <Log>
                Polecenie: _smartsel
                <LogScroll>
                  <button type="button" aria-label="Przewiń w górę"><svg width="5" height="3"><path d="M0 3h5L2.500 0z" fill="#6f767e" /></svg></button>
                  <button type="button" aria-label="Przewiń w dół"><svg width="5" height="3"><path d="M0 0h5L2.500 3z" fill="#6f767e" /></svg></button>
                </LogScroll>
              </Log>
              <Prompt>Polecenie:<input type="text" /></Prompt>
            </CommandText>
          </Command>
        </Right>
      </Workspace>

      <Status>
        <Coords>3756.5242, -1568.5949, 0.0000</Coords>
        <Toggles>
          {toggles.map(([n, on]) => (
            <Toggle key={n} type="button" $on={on} aria-pressed={on} aria-label={n}><Icon name={n} /></Toggle>
          ))}
        </Toggles>
        <StatusRight>
          <Icon name="anno" />
          <ScaleButton type="button">1:1<Caret /></ScaleButton>
          <Icon name="annoB" /><Icon name="annoC" /><Icon name="gear" /><Icon name="full" />
          <svg width="12" height="14" viewBox="0 0 12 14"><path d="M2 14L12 4M6 14l6-6M10 14l2-2" stroke="#aab0b6" /></svg>
        </StatusRight>
      </Status>
    </Frame>
  );
}
